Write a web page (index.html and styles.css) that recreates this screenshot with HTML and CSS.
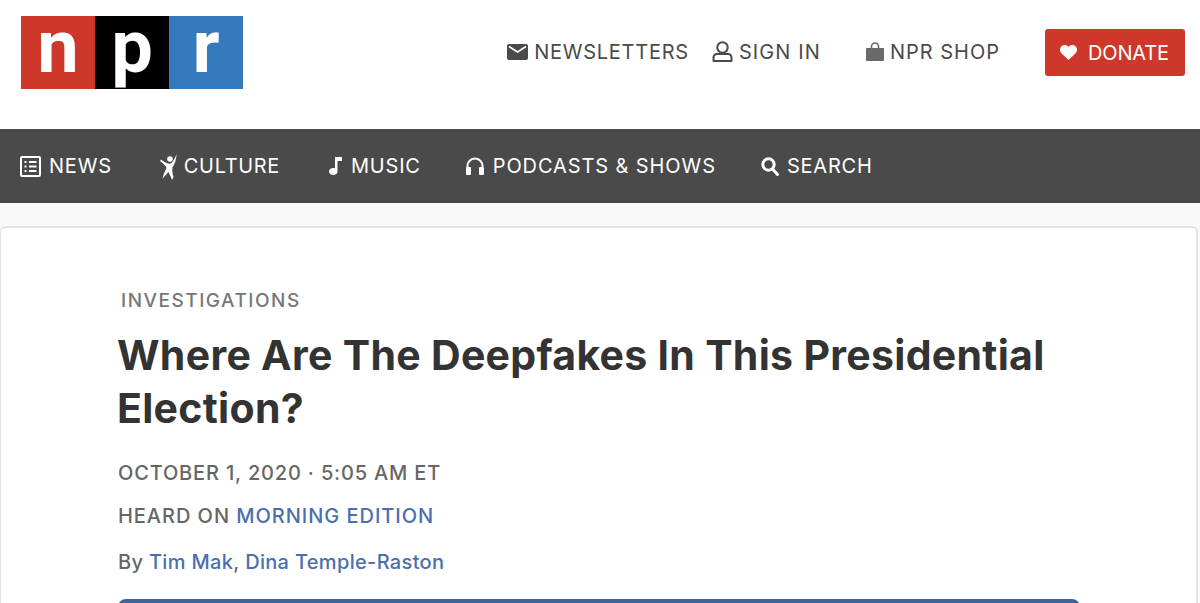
FILE: index.html
```html
<!DOCTYPE html>
<html lang="en">
<head>
    <meta charset="UTF-8">
    <title>Where Are The Deepfakes In This Presidential Election?</title>
    <link rel="stylesheet" href="styles.css">
</head>
<body>
    <header class="top">
        <a class="logo" href="#">
            <span class="logo-n">n</span><span class="logo-p">p</span><span class="logo-r">r</span>
        </a>
        <div class="top-links">
            <a class="top-link link-news" href="#">
                <svg width="21" height="16" viewBox="0 0 21 16"><rect width="21" height="16" rx="2" fill="#4a4a4a"/><path d="M2 2.500l8.500 5.500 8.500-5.500" fill="none" stroke="#fff" stroke-width="1.600"/></svg>
                NEWSLETTERS
            </a>
            <a class="top-link link-sign" href="#">
                <svg width="21" height="21" viewBox="0 0 21 21"><circle cx="10.500" cy="6.500" r="5.200" fill="none" stroke="#4a4a4a" stroke-width="2"/><path d="M1.500 20v-3.500a3.500 3.500 0 0 1 3.500-3.500h11a3.500 3.500 0 0 1 3.500 3.500V20z" fill="none" stroke="#4a4a4a" stroke-width="2" stroke-linejoin="round"/></svg>
                SIGN IN
            </a>
            <a class="top-link link-shop" href="#">
                <svg width="18" height="19" viewBox="0 0 18 19"><path d="M5.500 6V4.500a3.500 3.500 0 0 1 7 0V6" fill="none" stroke="#6a6a6a" stroke-width="1.600"/><rect y="6" width="18" height="13" rx="1" fill="#6a6a6a"/></svg>
                NPR SHOP
            </a>
            <a class="donate" href="#">
                <svg width="17" height="15" viewBox="0 0 17 15"><path d="M8.500 15L1.400 8.200C-.6 6.200-.4 3 1.500 1.300 3.500-.5 6.600-.3 8.500 2c1.900-2.300 5-2.500 7-.7 1.900 1.700 2.100 4.900.1 6.900z" fill="#fff"/></svg>
                DONATE
            </a>
        </div>
    </header>

    <nav class="nav">
        <a class="nav-item item-news" href="#">
            <svg width="21" height="21" viewBox="0 0 21 21"><rect x="1" y="1" width="19" height="19" rx="1" fill="none" stroke="#fff" stroke-width="2"/><path d="M4.500 6h2M9 6h7.500M4.500 10.500h2M9 10.500h7.500M4.500 15h2M9 15h7.500" stroke="#fff" stroke-width="2"/></svg>
            NEWS
        </a>
        <a class="nav-item item-culture" href="#">
            <svg width="17" height="27" viewBox="0 0 17 27"><circle cx="10" cy="6" r="2.800" fill="#fff"/><path d="M16.500 1C16.500 6 15 11 12.500 14 12 18 12.500 21 13.500 24L12 27C10.500 23 9.500 21 8.500 19 6.500 21 4 24 2.500 26 3 22 5 18 6.500 15 6 13 3 10 0 8L1 6.500C3 8 6 10 8.500 10.500 10 11 11 10.500 12 9.500 14 7 15.500 4 16.500 1z" fill="#fff"/></svg>
            CULTURE
        </a>
        <a class="nav-item item-music" href="#">
            <svg width="13" height="18" viewBox="0 0 13 18"><path d="M6 0h7v4H8.500v10.500C8.500 16.500 6.700 18 4.300 18 1.900 18 0 16.500 0 14.500S1.900 11 4.300 11c.6 0 1.200.1 1.700.3z" fill="#fff"/></svg>
            MUSIC
        </a>
        <a class="nav-item item-podcasts" href="#">
            <svg width="18" height="18" viewBox="0 0 18 18"><path d="M1.500 12V9a7.500 7.500 0 0 1 15 0v3" fill="none" stroke="#fff" stroke-width="2"/><rect y="10" width="5" height="8" rx="1" fill="#fff"/><rect x="13" y="10" width="5" height="8" rx="1" fill="#fff"/></svg>
            PODCASTS &amp; SHOWS
        </a>
        <a class="nav-item item-search" href="#">
            <svg width="18" height="19" viewBox="0 0 18 19"><circle cx="7.500" cy="7.500" r="5.700" fill="none" stroke="#fff" stroke-width="3"/><path d="M11.500 12l5 5.500" stroke="#fff" stroke-width="3" stroke-linecap="round"/></svg>
            SEARCH
        </a>
    </nav>

    <main class="card">
        <div class="slug">INVESTIGATIONS</div>
        <h1>Where Are The Deepfakes In This Presidential Election?</h1>
        <p class="date">OCTOBER 1, 2020 · 5:05 AM ET</p>
        <p class="heard">HEARD ON <a href="#">MORNING EDITION</a></p>
        <p class="byline">By <a href="#">Tim Mak</a>, <a href="#">Dina Temple-Raston</a></p>
        <div class="player"></div>
    </main>
</body>
</html>
```

FILE: styles.css
```css
html, body {
    height: 100%;
    overflow: hidden;
}

body {
    margin: 0;
    font-family: Inter, "Liberation Sans", sans-serif;
    background-color: #f9f9f9;
    color: #333;
}

a {
    text-decoration: none;
    color: inherit;
}

.top {
    height: 129px;
    background-color: #fff;
    display: flex;
    justify-content: space-between;
    padding: 16px 15px 0 21px;
    box-sizing: border-box;
}

.logo {
    display: flex;
    height: 73px;
    font-family: Roboto, sans-serif;
    font-size: 74px;
    font-weight: 700;
    color: #fff;
}

.logo span {
    width: 74px;
    height: 73px;
    line-height: 61px;
    text-align: center;
}

.logo-n {
    background-color: #cd382b;
}

.logo-p {
    background-color: #000;
}

.logo-r {
    background-color: #3379bc;
}

.top-links {
    display: flex;
    align-items: center;
    height: 73px;
}

.top-link {
    display: flex;
    align-items: center;
    gap: 6px;
    font-size: 20px;
    color: #4a4a4a;
    margin-top: -2px;
}

.link-news {
    letter-spacing: 0.75px;
    margin-right: 23px;
}

.link-sign {
    letter-spacing: 1.1px;
    margin-right: 45px;
}

.link-shop {
    letter-spacing: 1px;
    margin-right: 45px;
}

.donate {
    display: flex;
    align-items: center;
    gap: 11px;
    width: 140px;
    height: 47px;
    box-sizing: border-box;
    padding-left: 15px;
    background-color: #cd382b;
    border-radius: 3px;
    color: #fff;
    font-size: 20px;
    letter-spacing: -0.15px;
}

.nav {
    height: 74px;
    background-color: #4a4a4a;
    display: flex;
    align-items: center;
    padding-left: 20px;
    color: #fff;
}

.nav-item {
    display: flex;
    align-items: center;
    gap: 9px;
    font-size: 20px;
    letter-spacing: 0.8px;
    margin-right: 45px;
}

.item-news {
    gap: 8px;
    margin-right: 48px;
}

.item-culture {
    gap: 7px;
    letter-spacing: 0.65px;
    margin-right: 49px;
}

.item-podcasts {
    letter-spacing: 0.9px;
}

.item-search {
    gap: 8px;
}

.card {
    margin: 23px 2px 0 0;
    height: 500px;
    box-sizing: border-box;
    padding: 60px 117px 0;
    background-color: #fff;
    border: 2px solid #e3e3e3;
    border-left-width: 1px;
    border-radius: 6px;
}

.slug {
    margin-left: 3px;
    font-size: 19px;
    font-weight: 500;
    letter-spacing: 1.5px;
    line-height: 26px;
    color: #777;
}

h1 {
    margin: 15px 0 0 -1px;
    font-size: 41px;
    font-weight: 700;
    line-height: 53px;
    letter-spacing: 0.3px;
    color: #333;
}

.date, .heard, .byline {
    margin: 0;
    font-size: 20px;
    font-weight: 500;
    line-height: 26px;
    color: #666;
}

.date {
    letter-spacing: 0.83px;
    margin-top: 25px;
}

.heard {
    letter-spacing: 0.96px;
    margin-top: 17px;
}

.byline {
    letter-spacing: 0.33px;
    margin-top: 20px;
}

.heard a, .byline a {
    color: #4a6fb0;
}

.player {
    margin-top: 24px;
    height: 40px;
    background-color: #3c629f;
    border-radius: 8px;
    width: 962px;
}
```
